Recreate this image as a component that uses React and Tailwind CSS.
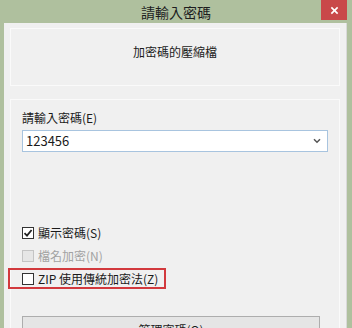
export default function App() {
    const font = { fontFamily: '"Segoe UI", "Noto Sans CJK TC", "Noto Sans", sans-serif' };
    return (
        <div className="w-[352px] h-[328px] overflow-hidden bg-[#afc09e] flex flex-col text-[12px] text-[#1b1b1b]" style={font}>
            {/* Title bar */}
            <div className="relative h-[23px] flex-shrink-0 flex items-center justify-center">
                <span className="text-[14px] text-[#1e1e1e] leading-none">請輸入密碼</span>
                <div className="absolute right-[5px] top-0 w-[26px] h-[20px] bg-[#c9484a] flex items-center justify-center">
                    <svg width="9" height="9" viewBox="0 0 10 10" stroke="#ffffff" strokeWidth="1.8">
                        <path d="M1.5 1.5L8.5 8.5M8.5 1.5L1.5 8.5" />
                    </svg>
                </div>
            </div>

            {/* Body */}
            <div className="flex-1 ml-[4px] mr-[5px] bg-[#f0f0f0] border-r border-[#d9d9d9] flex flex-col px-[6px] pt-[5px]">
                <div className="h-[58px] border border-[#fafafa] flex items-start justify-center pt-[14px]">
                    <span className="text-[12px]">加密碼的壓縮檔</span>
                </div>

                <div className="mt-[13px] flex-1 border border-[#fafafa] border-b-0 flex flex-col px-[11px] pt-[10px]">
                    <div className="leading-[16px]">請輸入密碼(E)</div>
                    <div className="mt-[4px] h-[22px] bg-white border border-[#a8c4df] flex items-center justify-between pl-[3px] pr-[6px]">
                        <span className="text-[13px]">123456</span>
                        <svg width="8" height="6" viewBox="0 0 8 6" fill="none" stroke="#555" strokeWidth="1.5">
                            <path d="M1 1.2L4 4.2L7 1.2" />
                        </svg>
                    </div>

                    <div className="mt-[74px] flex flex-col gap-[9px]">
                        <label className="flex items-center gap-[4px] h-[14px]">
                            <span className="w-[12px] h-[12px] bg-white border border-[#333] flex items-center justify-center">
                                <svg width="10" height="10" viewBox="0 0 10 10" fill="none" stroke="#222" strokeWidth="1.8">
                                    <path d="M1.5 5.2L4 7.6L8.6 2" />
                                </svg>
                            </span>
                            <span>顯示密碼(S)</span>
                        </label>
                        <label className="flex items-center gap-[4px] h-[14px] text-[#a2a2a2]">
                            <span className="w-[12px] h-[12px] bg-[#e6e6e6] border border-[#c4c4c4]"></span>
                            <span>檔名加密(N)</span>
                        </label>
                        <div className="-mt-[4px] -ml-[14px] w-[158px] h-[21px] border-2 border-[#d2393d] flex items-center pl-[12px]">
                            <label className="flex items-center gap-[4px]">
                                <span className="w-[12px] h-[12px] bg-white border border-[#333]"></span>
                                <span>ZIP 使用傳統加密法(Z)</span>
                            </label>
                        </div>
                    </div>

                    <div className="mt-[27px] h-[24px] border border-[#adadad] bg-[#e5e5e5] flex items-start justify-center pt-[4px] mr-[8px]">
                        <span>管理密碼(O)</span>
                    </div>
                </div>
            </div>
        </div>
    );
}
